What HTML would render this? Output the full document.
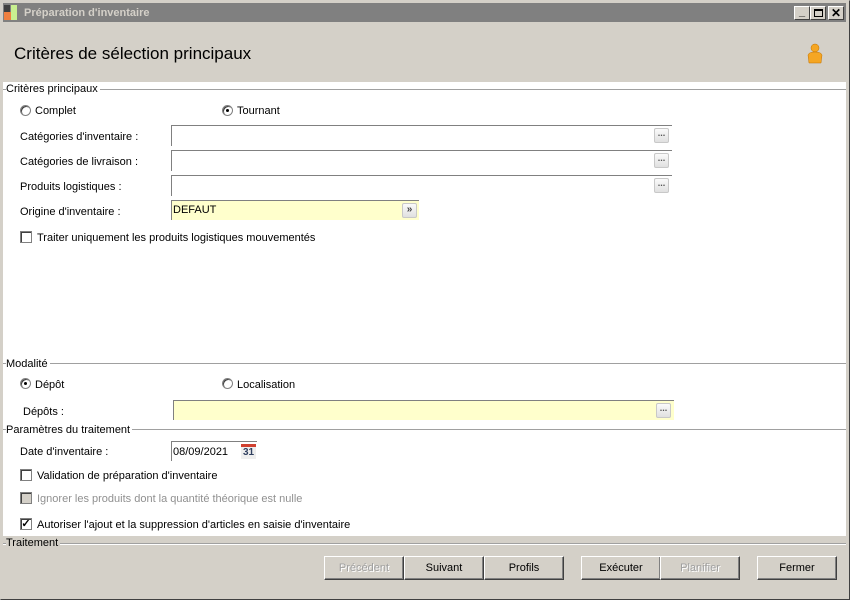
<!DOCTYPE html>
<html><head><meta charset="utf-8"><style>
*{box-sizing:border-box;margin:0;padding:0}
body{width:850px;height:600px;background:#d4d0c8;font-family:"Liberation Sans",sans-serif;font-size:11px;color:#000;position:relative;overflow:hidden}
.a{position:absolute}
.lbl{position:absolute;font-size:11px;white-space:nowrap;margin-top:1px}
.inp{position:absolute;background:#fff;border-top:1px solid #808080;border-left:1px solid #808080}
.dots{position:absolute;width:15px;height:15px;border:1px solid #c8c8c8;border-radius:2px;background:linear-gradient(#fafafa,#e0e0e0);font-size:9px;line-height:9px;text-align:center;color:#555;font-weight:bold}
.rad{position:absolute;width:11px;height:11px;border-radius:50%;border:1px solid #808080;background:#fff;box-shadow:inset 1px 1px 0 #404040;margin-top:1px}
.rad.on::after{content:"";position:absolute;left:3px;top:3px;width:3px;height:3px;background:#000;border-radius:50%}
.chk{position:absolute;width:12px;height:12px;border:1px solid #808080;background:#fff;box-shadow:inset 1px 1px 0 #404040;margin-top:1px}
.sec{position:absolute;left:6px;font-size:11px;white-space:nowrap;background:#fff;padding-right:2px}
.line{position:absolute;height:2px;border-top:1px solid #a0a0a0;border-bottom:1px solid #fff}
.btn{position:absolute;top:556px;height:24px;width:80px;border:1px solid;border-color:#fff #404040 #404040 #fff;box-shadow:inset -1px -1px 0 #808080;background:#d4d0c8;text-align:center;line-height:22px;font-size:11px}
.dis{color:#a0a0a0;text-shadow:1px 1px 0 #fff}
</style></head><body>
<div class="a" style="left:0;top:0;width:850px;height:600px;border:1px solid #d4d0c8;border-right-color:#404040;border-bottom-color:#404040"></div>
<div class="a" style="left:3px;top:3px;width:843px;height:19px;background:#808080"></div>
<div class="a" style="left:4px;top:5px;width:6px;height:8px;background:#404040"></div>
<div class="a" style="left:4px;top:12px;width:7px;height:8px;background:#f08040"></div>
<div class="a" style="left:11px;top:5px;width:6px;height:15px;background:#c8f090"></div>
<div class="lbl" style="left:24px;top:6px;color:#d4d0c8;font-weight:bold;font-size:11px">Préparation d'inventaire</div>
<div class="a" style="left:794px;top:6px;width:16px;height:14px;background:#d4d0c8;border:1px solid;border-color:#fff #404040 #404040 #fff;font-weight:bold;text-align:center;line-height:10px">_</div>
<div class="a" style="left:810px;top:6px;width:16px;height:14px;background:#d4d0c8;border:1px solid;border-color:#fff #404040 #404040 #fff"><div class="a" style="left:3px;top:2px;width:9px;height:8px;border:1px solid #000;border-top-width:2px"></div></div>
<div class="a" style="left:828px;top:6px;width:16px;height:14px;background:#d4d0c8;border:1px solid;border-color:#fff #404040 #404040 #fff;font-weight:bold;text-align:center;line-height:12px;font-size:12px">✕</div>
<div class="lbl" style="left:14px;top:43px;font-size:17px">Critères de sélection principaux</div>
<svg class="a" style="left:806px;top:42px" width="18" height="23"><circle cx="9" cy="6" r="4" fill="#f5a623" stroke="#c07000" stroke-width=".5"/><path d="M3 21 L2 13 Q3 10 9 10 Q15 10 16 13 L15 21 Z" fill="#f5a623" stroke="#c07000" stroke-width=".5"/></svg>
<div class="a" style="left:3px;top:82px;width:843px;height:454px;background:#fff"></div>
<div class="line" style="left:3px;top:89px;width:843px"></div><div class="sec" style="top:83px">Critères principaux</div>
<div class="rad" style="left:20px;top:104px"></div><div class="lbl" style="left:35px;top:104px">Complet</div>
<div class="rad on" style="left:222px;top:104px"></div><div class="lbl" style="left:237px;top:104px">Tournant</div>
<div class="lbl" style="left:20px;top:130px">Catégories d'inventaire :</div>
<div class="inp" style="left:171px;top:125px;width:501px;height:21px"></div><div class="dots" style="left:654px;top:128px">...</div>
<div class="lbl" style="left:20px;top:155px">Catégories de livraison :</div>
<div class="inp" style="left:171px;top:150px;width:501px;height:21px"></div><div class="dots" style="left:654px;top:153px">...</div>
<div class="lbl" style="left:20px;top:180px">Produits logistiques :</div>
<div class="inp" style="left:171px;top:175px;width:501px;height:21px"></div><div class="dots" style="left:654px;top:178px">...</div>
<div class="lbl" style="left:20px;top:205px">Origine d'inventaire :</div>
<div class="inp" style="left:171px;top:200px;width:248px;height:20px;background:#ffffcc"><span class="a" style="left:1px;top:3px">DEFAUT</span><div class="dots" style="left:230px;top:2px;color:#444;font-size:10px;line-height:12px">»</div></div>
<div class="chk" style="left:20px;top:230px"></div><div class="lbl" style="left:37px;top:231px">Traiter uniquement les produits logistiques mouvementés</div>
<div class="line" style="left:3px;top:363px;width:843px"></div><div class="sec" style="top:358px">Modalité</div>
<div class="rad on" style="left:20px;top:377px"></div><div class="lbl" style="left:35px;top:378px">Dépôt</div>
<div class="rad" style="left:222px;top:377px"></div><div class="lbl" style="left:237px;top:378px">Localisation</div>
<div class="lbl" style="left:23px;top:405px">Dépôts :</div>
<div class="inp" style="left:173px;top:400px;width:501px;height:20px;background:#ffffcc"><div class="dots" style="left:482px;top:2px">...</div></div>
<div class="line" style="left:3px;top:429px;width:843px"></div><div class="sec" style="top:424px">Paramètres du traitement</div>
<div class="lbl" style="left:20px;top:445px">Date d'inventaire :</div>
<div class="inp" style="left:171px;top:441px;width:86px;height:20px;border-right:0;border-bottom:0"><span class="a" style="left:1px;top:4px">08/09/2021</span></div>
<div class="a" style="left:241px;top:444px;width:15px;height:15px;background:#eee;border-top:3px solid #d04030;font-size:10px;font-weight:bold;color:#304060;text-align:center;line-height:12px">31</div>
<div class="chk" style="left:20px;top:468px"></div><div class="lbl" style="left:37px;top:469px">Validation de préparation d'inventaire</div>
<div class="chk" style="left:20px;top:491px;background:#d4d0c8"></div><div class="lbl" style="left:37px;top:492px;color:#909090">Ignorer les produits dont la quantité théorique est nulle</div>
<div class="chk" style="left:20px;top:517px;font-size:11px;line-height:10px;text-align:center;font-weight:bold">✓</div><div class="lbl" style="left:37px;top:518px">Autoriser l'ajout et la suppression d'articles en saisie d'inventaire</div>
<div class="line" style="left:3px;top:543px;width:843px"></div><div class="sec" style="top:537px;background:#d4d0c8">Traitement</div>
<div class="btn dis" style="left:324px">Précédent</div>
<div class="btn" style="left:404px">Suivant</div>
<div class="btn" style="left:484px">Profils</div>
<div class="btn" style="left:581px">Exécuter</div>
<div class="btn dis" style="left:660px">Planifier</div>
<div class="btn" style="left:757px">Fermer</div>
</body></html>
